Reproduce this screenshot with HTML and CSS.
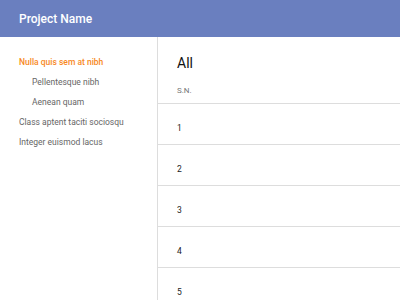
FILE: index.html
```html
<!DOCTYPE html>
<html lang="en">
<head>
    <meta charset="UTF-8">
    <title>Project Name</title>
    <link rel="stylesheet" href="styles.css">
</head>
<body>
    <header class="topbar">
        <span class="brand">Project Name</span>
    </header>
    <div class="layout">
        <nav class="sidebar">
            <a class="nav-item active">Nulla quis sem at nibh</a>
            <a class="nav-item sub">Pellentesque nibh</a>
            <a class="nav-item sub">Aenean quam</a>
            <a class="nav-item">Class aptent taciti sociosqu</a>
            <a class="nav-item">Integer euismod lacus</a>
        </nav>
        <main class="content">
            <h1 class="title">All</h1>
            <table class="list">
                <thead>
                    <tr><th>S.N.</th></tr>
                </thead>
                <tbody>
                    <tr><td>1</td></tr>
                    <tr><td>2</td></tr>
                    <tr><td>3</td></tr>
                    <tr><td>4</td></tr>
                    <tr><td>5</td></tr>
                </tbody>
            </table>
        </main>
    </div>
</body>
</html>
```

FILE: styles.css
```css
body {
    margin: 0;
    font-family: Roboto, "Liberation Sans", sans-serif;
    background: #fff;
    color: #222;
}
.topbar {
    height: 37px;
    background: #6a7fbf;
    display: flex;
    align-items: center;
    padding: 0 19px;
}
.brand {
    color: #fff;
    font-size: 12px;
    font-weight: 500;
}
.layout {
    display: flex;
    min-height: 263px;
}
.sidebar {
    width: 157px;
    border-right: 1px solid #ddd;
    padding-top: 15px;
    display: flex;
    flex-direction: column;
}
.nav-item {
    font-size: 8.5px;
    line-height: 20px;
    color: #666;
    padding-left: 19px;
}
.nav-item.sub {
    padding-left: 32px;
}
.nav-item.active {
    color: #f7891e;
    font-weight: 500;
}
.content {
    flex: 1;
}
.title {
    margin: 0;
    padding: 18px 0 0 19px;
    font-size: 14px;
    font-weight: 400;
    line-height: 16px;
    color: #111;
}
.list {
    width: 100%;
    border-collapse: collapse;
}
.list th {
    text-align: left;
    font-size: 8px;
    font-weight: 400;
    color: #777;
    padding: 14px 19px 6px;
    line-height: 12px;
    border-bottom: 1px solid #ddd;
}
.list td {
    font-size: 8.5px;
    color: #222;
    padding: 18px 19px 10px;
    line-height: 12px;
    border-bottom: 1px solid #ddd;
}
```
